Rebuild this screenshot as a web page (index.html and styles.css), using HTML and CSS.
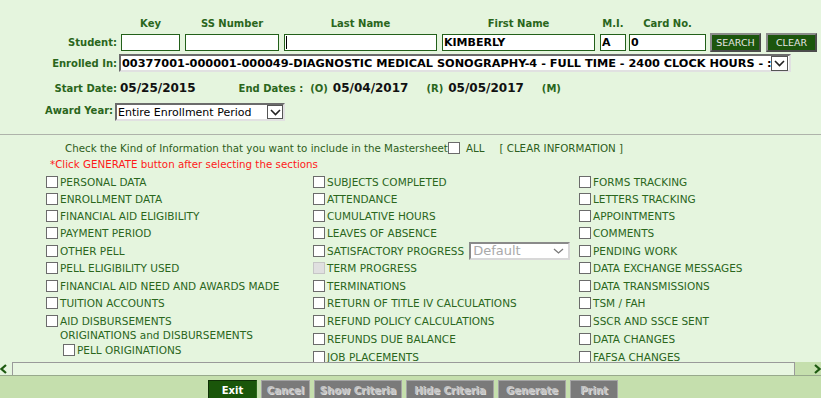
FILE: index.html
```html
<!DOCTYPE html>
<html lang="en">
<head>
    <meta charset="UTF-8">
    <title>Mastersheet</title>
    <link rel="stylesheet" href="styles.css">
</head>
<body>

    <div class="search">
        <div class="search-grid">
            <span></span>
            <span class="col-head w-key">Key</span>
            <span class="col-head w-ss">SS Number</span>
            <span class="col-head w-name">Last Name</span>
            <span class="col-head w-name">First Name</span>
            <span class="col-head w-mi">M.I.</span>
            <span class="col-head w-card">Card No.</span>
            <span></span>
            <span></span>

            <span class="row-label">Student:</span>
            <input class="field w-key" type="text" value="">
            <input class="field w-ss" type="text" value="">
            <input class="field w-name field-caret" type="text" value="">
            <input class="field w-name" type="text" value="KIMBERLY">
            <input class="field w-mi" type="text" value="A">
            <input class="field w-card" type="text" value="0">
            <button class="btn-dark">SEARCH</button>
            <button class="btn-dark">CLEAR</button>
        </div>

        <div class="enrolled">
            <span class="row-label">Enrolled In:</span>
            <div class="select select-enrolled">
                <span class="select-text">00377001-000001-000049-DIAGNOSTIC MEDICAL SONOGRAPHY-4 - FULL TIME - 2400 CLOCK HOURS - :</span>
                <span class="select-arrow">
                    <svg width="11" height="7" viewBox="0 0 11 7"><polyline points="1,1 5.5,5.5 10,1" fill="none" stroke="#222" stroke-width="1.6"/></svg>
                </span>
            </div>
        </div>

        <div class="dates">
            <span class="row-label">Start Date:</span>
            <span class="date-value">05/25/2015</span>
            <span class="date-label end-label">End Dates :</span>
            <span class="date-label date-tag">(O)</span>
            <span class="date-value">05/04/2017</span>
            <span class="date-label date-tag wide">(R)</span>
            <span class="date-value">05/05/2017</span>
            <span class="date-label date-tag wide">(M)</span>
        </div>

        <div class="award">
            <span class="award-label">Award Year:</span>
            <div class="select select-award">
                <span class="select-text">Entire Enrollment Period</span>
                <span class="select-arrow">
                    <svg width="11" height="7" viewBox="0 0 11 7"><polyline points="1,1 5.5,5.5 10,1" fill="none" stroke="#222" stroke-width="1.6"/></svg>
                </span>
            </div>
        </div>
    </div>

    <div class="sections">
        <div class="intro">
            <span>Check the Kind of Information that you want to include in the Mastersheet</span>
            <input type="checkbox" class="check intro-check">
            <span class="all">ALL</span>
            <a class="clear-link">[ CLEAR INFORMATION ]</a>
        </div>
        <div class="note">*Click GENERATE button after selecting the sections</div>

        <div class="options">
            <label class="opt"><input type="checkbox" class="check">PERSONAL DATA</label>
            <label class="opt"><input type="checkbox" class="check">ENROLLMENT DATA</label>
            <label class="opt"><input type="checkbox" class="check">FINANCIAL AID ELIGIBILITY</label>
            <label class="opt"><input type="checkbox" class="check">PAYMENT PERIOD</label>
            <label class="opt"><input type="checkbox" class="check">OTHER PELL</label>
            <label class="opt"><input type="checkbox" class="check">PELL ELIGIBILITY USED</label>
            <label class="opt"><input type="checkbox" class="check">FINANCIAL AID NEED AND AWARDS MADE</label>
            <label class="opt"><input type="checkbox" class="check">TUITION ACCOUNTS</label>
            <label class="opt"><input type="checkbox" class="check">AID DISBURSEMENTS</label>
            <div class="sub-group">
                <div class="sub-title">ORIGINATIONS and DISBURSEMENTS</div>
                <label class="opt sub-opt"><input type="checkbox" class="check">PELL ORIGINATIONS</label>
            </div>

            <label class="opt"><input type="checkbox" class="check">SUBJECTS COMPLETED</label>
            <label class="opt"><input type="checkbox" class="check">ATTENDANCE</label>
            <label class="opt"><input type="checkbox" class="check">CUMULATIVE HOURS</label>
            <label class="opt"><input type="checkbox" class="check">LEAVES OF ABSENCE</label>
            <label class="opt"><input type="checkbox" class="check">SATISFACTORY PROGRESS
                <span class="select select-sap">
                    <span class="select-text">Default</span>
                    <svg width="11" height="6" viewBox="0 0 11 6"><polyline points="1,1 5.5,5 10,1" fill="none" stroke="#7a7a7a" stroke-width="1.3"/></svg>
                </span>
            </label>
            <label class="opt"><input type="checkbox" class="check" disabled>TERM PROGRESS</label>
            <label class="opt"><input type="checkbox" class="check">TERMINATIONS</label>
            <label class="opt"><input type="checkbox" class="check">RETURN OF TITLE IV CALCULATIONS</label>
            <label class="opt"><input type="checkbox" class="check">REFUND POLICY CALCULATIONS</label>
            <label class="opt"><input type="checkbox" class="check">REFUNDS DUE BALANCE</label>
            <label class="opt"><input type="checkbox" class="check">JOB PLACEMENTS</label>

            <label class="opt"><input type="checkbox" class="check">FORMS TRACKING</label>
            <label class="opt"><input type="checkbox" class="check">LETTERS TRACKING</label>
            <label class="opt"><input type="checkbox" class="check">APPOINTMENTS</label>
            <label class="opt"><input type="checkbox" class="check">COMMENTS</label>
            <label class="opt"><input type="checkbox" class="check">PENDING WORK</label>
            <label class="opt"><input type="checkbox" class="check">DATA EXCHANGE MESSAGES</label>
            <label class="opt"><input type="checkbox" class="check">DATA TRANSMISSIONS</label>
            <label class="opt"><input type="checkbox" class="check">TSM / FAH</label>
            <label class="opt"><input type="checkbox" class="check">SSCR AND SSCE SENT</label>
            <label class="opt"><input type="checkbox" class="check">DATA CHANGES</label>
            <label class="opt"><input type="checkbox" class="check">FAFSA CHANGES</label>
        </div>
    </div>

    <div class="hscroll">
        <span class="hscroll-left">
            <svg width="7" height="10" viewBox="0 0 7 10"><polyline points="6,1 1.5,5 6,9" fill="none" stroke="#1d5a10" stroke-width="2.2"/></svg>
        </span>
        <div class="hscroll-track"></div>
        <span class="hscroll-right">
            <svg width="7" height="10" viewBox="0 0 7 10"><polyline points="1,1 5.5,5 1,9" fill="none" stroke="#1d5a10" stroke-width="2.2"/></svg>
        </span>
    </div>

    <div class="actions">
        <button class="act act-exit">Exit</button>
        <button class="act act-off w-cancel">Cancel</button>
        <button class="act act-off w-criteria">Show Criteria</button>
        <button class="act act-off w-criteria">Hide Criteria</button>
        <button class="act act-off w-generate">Generate</button>
        <button class="act act-off w-print">Print</button>
    </div>

</body>
</html>
```

FILE: styles.css
```css
body {
    margin: 0;
    height: 398px;
    overflow: hidden;
    background: #e5f5de;
    font-family: "DejaVu Sans", Verdana, sans-serif;
    font-size: 10px;
    color: #2a661c;
}

/* search block */
.search {
    height: 134px;
    box-sizing: border-box;
    padding-top: 18px;
}
.search-grid {
    display: grid;
    grid-template-columns: 121px 64px 99px 158px 158px 29px 81px 56px 50px;
    grid-template-rows: 12px 19px;
    row-gap: 3px;
    align-items: center;
}
.col-head {
    font-weight: bold;
    text-align: center;
    line-height: 12px;
}
.w-key { width: 59px; }
.w-ss { width: 94px; }
.w-name { width: 153px; }
.w-mi { width: 26px; }
.w-card { width: 77px; }
.row-label {
    font-weight: bold;
    text-align: right;
    padding-right: 4px;
}
.field {
    height: 17px;
    box-sizing: border-box;
    margin: 0;
    padding: 0 1px;
    border: 1px solid #23601a;
    background: #fff;
    font: bold 11px "DejaVu Sans", Verdana, sans-serif;
    color: #000;
    outline: none;
}
.field-caret {
    background: linear-gradient(#000, #000) 1px 1px / 1px 13px no-repeat, #fff;
}
.btn-dark {
    width: 51px;
    height: 19px;
    margin: 0;
    padding: 0;
    background: #1c560d;
    border: 2px solid;
    border-color: #8c8c8c #4c4c4c #4c4c4c #8c8c8c;
    color: #e6e6e6;
    font: 9.5px "DejaVu Sans", Verdana, sans-serif;
}

.enrolled {
    display: flex;
    align-items: center;
    margin-top: 2px;
}
.enrolled .row-label {
    width: 117px;
    padding-right: 2px;
}
.select {
    display: flex;
    align-items: center;
    box-sizing: border-box;
    background: #fff;
    border: 2px solid;
    border-color: #6b6b6b #e1e1e1 #e1e1e1 #6b6b6b;
}
.select-text {
    flex: 1;
    overflow: hidden;
    white-space: nowrap;
    color: #000;
}
.select-arrow {
    display: flex;
    align-items: center;
    justify-content: center;
    box-sizing: border-box;
    border: 1px solid #555;
    background: #fff;
}
.select-enrolled {
    width: 672px;
    height: 18px;
    font-weight: bold;
    font-size: 11.3px;
    padding-left: 1px;
}
.select-enrolled .select-arrow {
    width: 17px;
    height: 15px;
    margin-right: 1px;
}

.dates {
    display: flex;
    align-items: baseline;
    margin-top: 9px;
    line-height: 15px;
}
.dates .row-label {
    width: 117px;
    padding-right: 3px;
}
.date-value {
    font-weight: bold;
    font-size: 12px;
    color: #111;
}
.date-label {
    font-weight: bold;
}
.end-label { margin-left: 43px; }
.date-tag { margin: 0 5px 0 7px; }
.date-tag.wide { margin-left: 18px; }

.award {
    display: flex;
    align-items: center;
    margin-top: 7px;
}
.award-label {
    width: 70px;
    padding-left: 45px;
    font-weight: bold;
    margin-top: -4px;
}
.select-award {
    width: 170px;
    height: 18px;
    font-size: 11px;
    padding-left: 1px;
}
.select-award .select-arrow {
    width: 16px;
    height: 14px;
}

/* sections */
.sections {
    height: 227px;
    overflow: hidden;
    border-top: 1px solid #aeb3aa;
}
.intro {
    display: flex;
    align-items: center;
    height: 12px;
    margin-top: 7px;
    padding-left: 65px;
    font-size: 10.3px;
    color: #2d5e20;
}
.intro-check { margin-left: 6px; }
.all { margin-left: 6px; }
.clear-link { margin-left: 15px; }
.note {
    margin-top: 4px;
    padding-left: 50px;
    line-height: 12px;
    font-size: 10.3px;
    color: #ff1a1a;
}
.options {
    display: grid;
    grid-auto-flow: column;
    grid-template-columns: 267px 266px 1fr;
    grid-template-rows: 17px 17px 17px 18px 17px 18px 17px 18px 18px 18px 18px;
    margin-top: 3px;
    padding-left: 46px;
    font-size: 10.5px;
}
.opt {
    display: flex;
    align-items: center;
    gap: 2px;
    white-space: nowrap;
}
.check {
    appearance: none;
    -webkit-appearance: none;
    width: 12px;
    height: 12px;
    margin: 0;
    border: 1px solid #6b6b6b;
    background: #fff;
    flex-shrink: 0;
}
.check:disabled {
    background: #e0e0e0;
    border-color: #c6c6c6;
}
.sub-group {
    grid-row: span 2;
    margin-top: -2px;
    padding-left: 14px;
}
.sub-title { line-height: 14px; }
.sub-opt {
    height: 16px;
    padding-left: 3px;
}
.select-sap {
    width: 101px;
    height: 18px;
    margin-left: 3px;
    padding: 0 4px 0 2px;
    border-color: #8a8a8a #d8d8d8 #d8d8d8 #8a8a8a;
    font-size: 13px;
}
.select-sap .select-text { color: #a9a9a9; }

/* horizontal scroller */
.hscroll {
    display: flex;
    height: 13px;
}
.hscroll-left {
    width: 12px;
    display: flex;
    align-items: center;
}
.hscroll-track {
    flex: 1;
    border: 1px solid #9a9a9a;
    border-bottom: none;
    background: #e8f6e1;
}
.hscroll-right {
    width: 26px;
    display: flex;
    align-items: center;
    justify-content: flex-end;
    background: #c5dfad;
}

/* action bar */
.actions {
    display: flex;
    gap: 4px;
    height: 23px;
    box-sizing: border-box;
    padding: 4px 0 0 208px;
    background: #c5dfad;
    border-top: 1px solid #98a98c;
}
.act {
    height: 21px;
    margin: 0;
    padding: 0;
    font: bold 10px "DejaVu Sans", Verdana, sans-serif;
    border: 1px solid #a5a5a5;
}
.act-exit {
    width: 49px;
    background: #1a560a;
    border-color: #0f2f06 #2c6a1c #2c6a1c #0f2f06;
    color: #fff;
}
.act-off {
    background: #7a7a7a;
    color: #c2c2c2;
    text-shadow: 1px 1px 0 #dadada;
}
.w-cancel { width: 49px; }
.w-criteria { width: 88px; }
.w-generate { width: 68px; }
.w-print { width: 48px; }
```
